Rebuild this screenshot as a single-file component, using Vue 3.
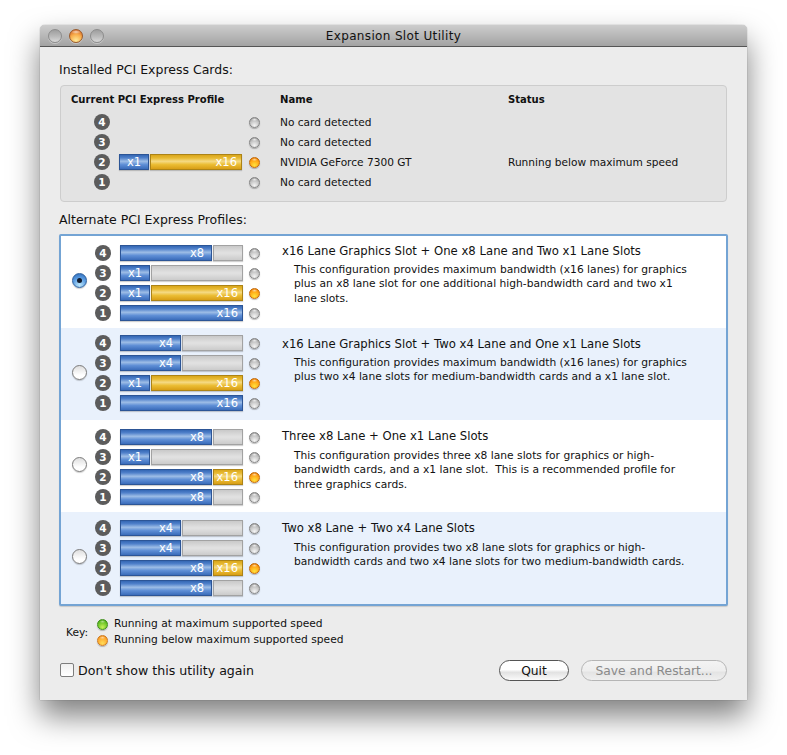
<script setup>
const x1 = { c: 'blue', w: 30, t: 'x1', pos: 'center' }
const x8 = { c: 'blue', w: 92, t: 'x8', pos: 'wide' }
const x4 = { c: 'blue', w: 61, t: 'x4', pos: 'wide' }
const gold92 = { c: 'gold', w: 92, t: 'x16' }
const gold30 = { c: 'gold', w: 30, t: 'x16' }
const installed = [
  { n: 4, segs: [], led: 'off', name: 'No card detected', status: '' },
  { n: 3, segs: [], led: 'off', name: 'No card detected', status: '' },
  { n: 2, segs: [x1, gold92], led: 'amber', name: 'NVIDIA GeForce 7300 GT', status: 'Running below maximum speed' },
  { n: 1, segs: [], led: 'off', name: 'No card detected', status: '' },
]
const x8g = [x8, { c: 'gray', w: 30 }]
const x1g = [x1, { c: 'gray', w: 92 }]
const x4g = [x4, { c: 'gray', w: 61 }]
const x1x16 = [x1, gold92]
const x8x16 = [x8, gold30]
const x16 = [{ c: 'blue', w: 123, t: 'x16' }]
const profiles = [
  { sel: true, tint: false, title: 'x16 Lane Graphics Slot + One x8 Lane and Two x1 Lane Slots',
    lines: ['This configuration provides maximum bandwidth (x16 lanes) for graphics', 'plus an x8 lane slot for one additional high-bandwidth card and two x1', 'lane slots.'],
    slots: [x8g, x1g, x1x16, x16] },
  { sel: false, tint: true, title: 'x16 Lane Graphics Slot + Two x4 Lane and One x1 Lane Slots',
    lines: ['This configuration provides maximum bandwidth (x16 lanes) for graphics', 'plus two x4 lane slots for medium-bandwidth cards and a x1 lane slot.'],
    slots: [x4g, x4g, x1x16, x16] },
  { sel: false, tint: false, title: 'Three x8 Lane + One x1 Lane Slots',
    lines: ['This configuration provides three x8 lane slots for graphics or high-', 'bandwidth cards, and a x1 lane slot.  This is a recommended profile for', 'three graphics cards.'],
    slots: [x8g, x1g, x8x16, x8g] },
  { sel: false, tint: true, title: 'Two x8 Lane + Two x4 Lane Slots',
    lines: ['This configuration provides two x8 lane slots for graphics or high-', 'bandwidth cards and two x4 lane slots for two medium-bandwidth cards.'],
    slots: [x4g, x4g, x8x16, x8g] },
]
const nums = [4, 3, 2, 1]
</script>

<template>
  <div class="page">
    <div class="window">
      <div class="titlebar">
        <div class="lights">
          <span class="light"></span>
          <span class="light red"></span>
          <span class="light"></span>
        </div>
        <div class="wtitle">Expansion Slot Utility</div>
      </div>
      <div class="content">
        <div class="heading">Installed PCI Express Cards:</div>
        <div class="panel">
          <div class="phead">
            <div class="ph1">Current PCI Express Profile</div>
            <div class="ph2">Name</div>
            <div class="ph3">Status</div>
          </div>
          <div class="irows">
            <div v-for="r in installed" :key="r.n" class="irow">
              <span class="badge">{{ r.n }}</span>
              <div class="bar">
                <span v-for="(s, i) in r.segs" :key="i" class="seg" :class="[s.c, s.pos]" :style="{ width: s.w + 'px' }">{{ s.t }}</span>
              </div>
              <span class="led" :class="r.led"></span>
              <span class="iname">{{ r.name }}</span>
              <span class="istatus">{{ r.status }}</span>
            </div>
          </div>
        </div>
        <div class="heading second">Alternate PCI Express Profiles:</div>
        <div class="list">
          <div v-for="(p, pi) in profiles" :key="pi" class="prow" :class="{ tint: p.tint }">
            <div class="radiocell"><span class="radio" :class="{ on: p.sel }"></span></div>
            <div class="slots">
              <div v-for="(segs, si) in p.slots" :key="si" class="srow">
                <span class="badge">{{ nums[si] }}</span>
                <div class="bar">
                  <span v-for="(s, i) in segs" :key="i" class="seg" :class="[s.c, s.pos]" :style="{ width: s.w + 'px' }">{{ s.t }}</span>
                </div>
                <span class="led" :class="si === 2 ? 'amber' : 'off'"></span>
              </div>
            </div>
            <div class="desc">
              <div class="dtitle">{{ p.title }}</div>
              <div v-for="(l, li) in p.lines" :key="li" class="dline">{{ l }}</div>
            </div>
          </div>
        </div>
        <div class="key">
          <span class="keylabel">Key:</span>
          <div class="keyitems">
            <div class="keyitem"><span class="led green"></span>Running at maximum supported speed</div>
            <div class="keyitem"><span class="led amberkey"></span>Running below maximum supported speed</div>
          </div>
        </div>
        <div class="footer">
          <label class="check"><span class="box"></span>Don't show this utility again</label>
          <div class="buttons">
            <span class="btn">Quit</span>
            <span class="btn disabled">Save and Restart...</span>
          </div>
        </div>
      </div>
    </div>
  </div>
</template>

<style>
html, body { margin: 0; background: #fff; }
</style>

<style scoped>
.page {
  height: 755px;
  box-sizing: border-box;
  padding: 25px 0 0 40px;
  overflow: hidden;
}
.window {
  width: 707px;
  height: 675px;
  background: #ececec;
  border-radius: 5px 5px 0 0;
  box-shadow: 0 16px 30px rgba(0, 0, 0, 0.5), 0 0 1px rgba(0, 0, 0, 0.6);
  font-family: "DejaVu Sans", sans-serif;
  color: #111;
  display: flex;
  flex-direction: column;
}
.titlebar {
  height: 21px;
  position: relative;
  background: linear-gradient(#cdcdcd, #a3a3a3);
  border-bottom: 1px solid #555;
  border-radius: 5px 5px 0 0;
  display: flex;
  align-items: center;
  justify-content: center;
  flex: none;
}
.lights {
  position: absolute;
  left: 8px;
  top: 4px;
  display: flex;
  gap: 7px;
}
.light {
  width: 12px;
  height: 12px;
  border-radius: 50%;
  border: 1px solid #8c8c8c;
  background: linear-gradient(#9e9e9e, #b8b8b8 50%, #d8d8d8);
  box-shadow: 0 1px 0 rgba(255, 255, 255, 0.35);
}
.light.red {
  border-color: #9a5a2a;
  background:
    radial-gradient(ellipse 5px 2px at 50% 16%, rgba(255, 255, 255, 0.65), transparent),
    radial-gradient(circle at 50% 88%, #ffeb9a, #f9ae4c 50%, #cf5a1e 95%);
}
.wtitle { font-size: 12px; letter-spacing: 0.35px; color: #111; }
.content {
  flex: 1;
  padding: 0 19px;
  display: flex;
  flex-direction: column;
}
.heading {
  font-size: 12.5px;
  line-height: 16px;
  margin-top: 15px;
  height: 16px;
}
.heading.second { margin-top: 10px; }
.panel {
  margin: 7px 1px 0;
  height: 117px;
  box-sizing: border-box;
  border: 1px solid #cdcdcd;
  border-radius: 4px;
  background: #e3e3e3;
  padding-top: 6px;
  font-size: 10.6px;
}
.phead {
  display: flex;
  height: 16px;
  line-height: 16px;
  font-weight: bold;
  font-size: 10.05px;
}
.ph1 { width: 219px; padding-left: 10px; box-sizing: border-box; }
.ph2 { width: 228px; }
.irows { padding-top: 4px; }
.irow {
  display: flex;
  align-items: center;
  height: 20px;
  padding-left: 33px;
}
.irow .bar { margin-left: 9px; margin-right: 7px; }
.iname { margin-left: 20px; width: 228px; flex: none; }
.badge {
  width: 16px;
  height: 16px;
  flex: none;
  border-radius: 50%;
  background: #5c5c5c;
  color: #fff;
  font-size: 10.5px;
  font-weight: bold;
  text-align: center;
  line-height: 16px;
}
.bar {
  width: 123px;
  height: 16px;
  flex: none;
  display: flex;
  gap: 1px;
}
.seg {
  height: 16px;
  box-sizing: border-box;
  color: #fff;
  font-size: 11.5px;
  line-height: 14px;
  text-align: right;
  padding-right: 4px;
  border: 1px solid;
  flex: none;
  box-shadow: 0 1px 1px rgba(0, 0, 0, 0.18);
}
.seg.center { text-align: center; padding-right: 0; }
.seg.wide { padding-right: 7px; }
.blue {
  border-color: #2c5596;
  background: linear-gradient(#3467b4, #4f80ca 20%, #9dbde6 45%, #5f8fd6 68%, #3a6cba);
}
.gold {
  border-color: #ac8316;
  background: linear-gradient(#d9a61c, #e8ba32 22%, #f5da84 45%, #ebbd34 68%, #d89e16);
}
.gray {
  border-color: #a2a2a2;
  background: linear-gradient(#c9c9c9, #e0e0e0 45%, #e0e0e0 55%, #cbcbcb);
}
.led {
  width: 11px;
  height: 11px;
  flex: none;
  border-radius: 50%;
  display: inline-block;
  box-sizing: border-box;
  box-shadow: 0 1px 1px rgba(0, 0, 0, 0.25);
}
.led.off {
  border: 1px solid #858585;
  background:
    radial-gradient(ellipse 3px 1.5px at 50% 18%, rgba(255, 255, 255, 0.75), transparent),
    radial-gradient(circle at 50% 82%, #f4f4f4, #c4c4c4 55%, #8e8e8e);
}
.led.amber {
  border: 1px solid #c46a08;
  background:
    radial-gradient(ellipse 3px 1.5px at 50% 18%, rgba(255, 255, 255, 0.6), transparent),
    radial-gradient(circle at 50% 80%, #ffe23c, #ffa414 60%, #e07004);
}
.led.amberkey {
  border: 1px solid #cf7a20;
  background:
    radial-gradient(ellipse 3px 1.5px at 50% 18%, rgba(255, 255, 255, 0.55), transparent),
    radial-gradient(circle at 50% 80%, #ffdc58, #ffab30 60%, #ea8618);
}
.led.green {
  border: 1px solid #3f8f1a;
  background:
    radial-gradient(ellipse 3px 1.5px at 50% 18%, rgba(255, 255, 255, 0.5), transparent),
    radial-gradient(circle at 50% 80%, #c6f25a, #6cc426 60%, #3a9a12);
}
.list {
  margin-top: 6px;
  width: 669px;
  height: 372px;
  box-sizing: border-box;
  border: 2px solid #74a4d4;
  border-radius: 2px;
  background: #fff;
  display: flex;
  flex-direction: column;
  box-shadow: 0 1px 1px rgba(0, 0, 0, 0.15);
}
.prow {
  height: 92px;
  flex: none;
  display: flex;
  background: #fff;
}
.prow.tint { background: #e9f1fc; }
.radiocell {
  width: 36px;
  flex: none;
  display: flex;
  align-items: center;
  padding: 0 0 4px 11px;
  box-sizing: border-box;
}
.radio {
  width: 15px;
  height: 15px;
  border-radius: 50%;
  box-sizing: border-box;
  border: 1px solid #7a7a7a;
  background: linear-gradient(#dedede, #ffffff 70%);
  box-shadow: 0 1px 1px rgba(0, 0, 0, 0.2);
  position: relative;
}
.radio.on {
  border-color: #2d5f9e;
  background: radial-gradient(circle at 50% 85%, #bfe8fa, #5a9ce2 55%, #2a66b4);
}
.radio.on::after {
  content: "";
  position: absolute;
  left: 4px;
  top: 4px;
  width: 5px;
  height: 5px;
  border-radius: 50%;
  background: #101a2c;
}
.slots {
  width: 185px;
  flex: none;
  padding-top: 5px;
  box-sizing: border-box;
}
.prow:nth-child(1) .slots,
.prow:nth-child(3) .slots { padding-top: 7px; }
.prow:nth-child(4) .slots { padding-top: 6px; }
.srow {
  display: flex;
  align-items: center;
  height: 20px;
}
.srow .badge { margin-left: -2px; margin-right: 9px; }
.srow .bar { margin-right: 6px; }
.desc { padding-top: 8px; }
.prow:nth-child(n + 2) .desc { padding-top: 9px; }
.dtitle {
  font-size: 11.66px;
  line-height: 15px;
  margin-bottom: 4px;
  white-space: nowrap;
}
.prow:nth-child(n + 3) .dtitle { margin-bottom: 5px; }
.dline {
  font-size: 10.7px;
  line-height: 14.4px;
  padding-left: 12px;
  white-space: pre;
}
.key {
  display: flex;
  align-items: center;
  margin-top: 10px;
  padding-left: 7px;
  font-size: 10.7px;
}
.keylabel { width: 31px; flex: none; }
.keyitems { display: flex; flex-direction: column; }
.keyitem {
  height: 16px;
  line-height: 16px;
  display: flex;
  align-items: center;
  gap: 6px;
}
.footer {
  display: flex;
  align-items: center;
  justify-content: space-between;
  margin-top: 11px;
  height: 22px;
  padding-right: 1px;
}
.check {
  display: flex;
  align-items: center;
  font-size: 12.6px;
  gap: 4px;
  margin-left: 1px;
}
.box {
  width: 14px;
  height: 14px;
  box-sizing: border-box;
  border: 1px solid #7d7d7d;
  border-radius: 2px;
  background: linear-gradient(#f0f0f0, #fff);
}
.buttons { display: flex; gap: 12px; }
.btn {
  height: 21px;
  box-sizing: border-box;
  width: 70px;
  border: 1px solid #555;
  border-radius: 11px;
  background: linear-gradient(#fff 0, #fff 45%, #e2e2e2 60%, #fafafa);
  font-size: 12.3px;
  line-height: 20px;
  text-align: center;
  color: #111;
}
.btn.disabled {
  width: 146px;
  color: #8a8a8a;
  border-color: #b5b5b5;
  background: linear-gradient(#f3f3f3, #eeeeee 50%, #e4e4e4 60%, #efefef);
}
</style>
